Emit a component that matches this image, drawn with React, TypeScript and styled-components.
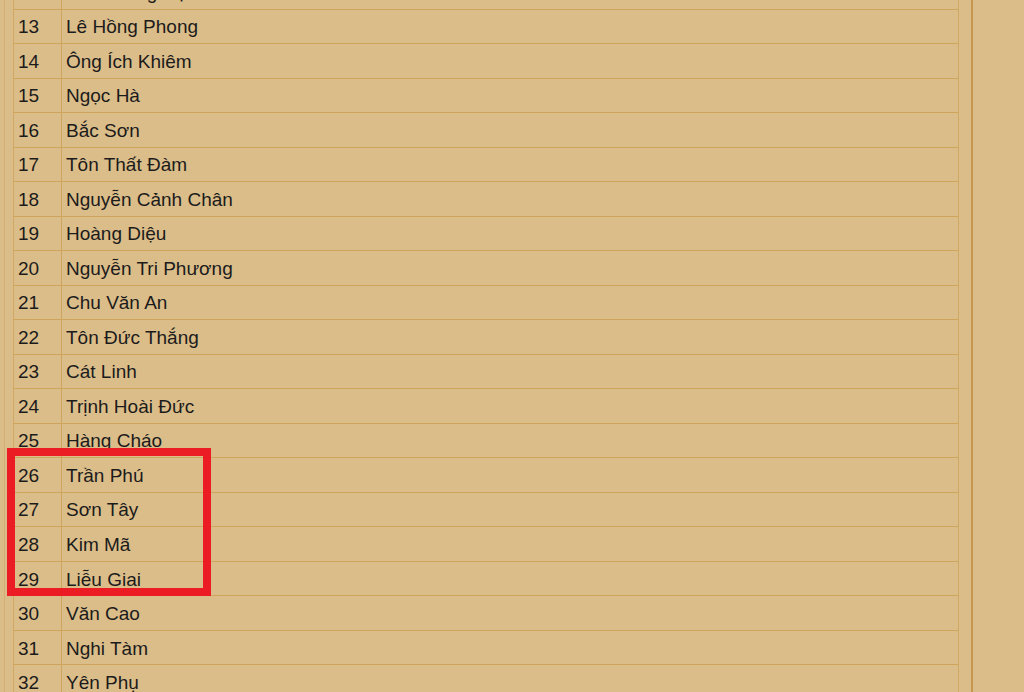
import styled, { createGlobalStyle } from "styled-components";

const streets: [number, string][] = [
  [12, "Trần Hưng Đạo"],
  [13, "Lê Hồng Phong"],
  [14, "Ông Ích Khiêm"],
  [15, "Ngọc Hà"],
  [16, "Bắc Sơn"],
  [17, "Tôn Thất Đàm"],
  [18, "Nguyễn Cảnh Chân"],
  [19, "Hoàng Diệu"],
  [20, "Nguyễn Tri Phương"],
  [21, "Chu Văn An"],
  [22, "Tôn Đức Thắng"],
  [23, "Cát Linh"],
  [24, "Trịnh Hoài Đức"],
  [25, "Hàng Cháo"],
  [26, "Trần Phú"],
  [27, "Sơn Tây"],
  [28, "Kim Mã"],
  [29, "Liễu Giai"],
  [30, "Văn Cao"],
  [31, "Nghi Tàm"],
  [32, "Yên Phụ"],
  [33, "Thanh Niên"],
];

const GlobalStyle = createGlobalStyle`
  html, body {
    margin: 0;
    padding: 0;
    background: #dbbd8a;
    overflow: hidden;
  }
  body {
    font-family: "Liberation Sans", Arial, sans-serif;
    color: #1b1b1b;
  }
`;

const Page = styled.div`
  position: relative;
  height: 692px;
  overflow: hidden;
`;

// the list is scrolled: row 12 sits mostly above the top edge
const Panel = styled.div`
  margin: -25px 0 0 4px;
  width: 969px;
  min-height: 720px;
  box-sizing: border-box;
  padding: 0 0 0 8px;
  border-left: 1px solid #d3ae6e;
  border-right: 2px solid #c8964e;
`;

const Table = styled.div`
  width: 946px;
  box-sizing: border-box;
  border-left: 1px solid #d2a962;
  border-right: 1px solid #d2a962;
`;

const Row = styled.div`
  display: grid;
  grid-template-columns: 48px 1fr;
  height: 34.53px;
  box-sizing: border-box;
  border-bottom: 1px solid #cfa45b;
`;

const Cell = styled.div<{ $divider?: boolean }>`
  display: flex;
  align-items: center;
  padding: 2px 4px 0 4px;
  font-size: 19px;
  line-height: 22px;
  white-space: nowrap;
  border-right: ${(p) => (p.$divider ? "1px solid #cfa45b" : "none")};
`;

const Highlight = styled.div`
  position: absolute;
  left: 7px;
  top: 448px;
  width: 204px;
  height: 148px;
  box-sizing: border-box;
  border: 8px solid #ec1c24;
  pointer-events: none;
`;

export default function App() {
  return (
    <>
      <GlobalStyle />
      <Page>
        <Panel>
          <Table>
            {streets.map(([no, name]) => (
              <Row key={no}>
                <Cell $divider>{no}</Cell>
                <Cell>{name}</Cell>
              </Row>
            ))}
          </Table>
        </Panel>
        <Highlight />
      </Page>
    </>
  );
}
